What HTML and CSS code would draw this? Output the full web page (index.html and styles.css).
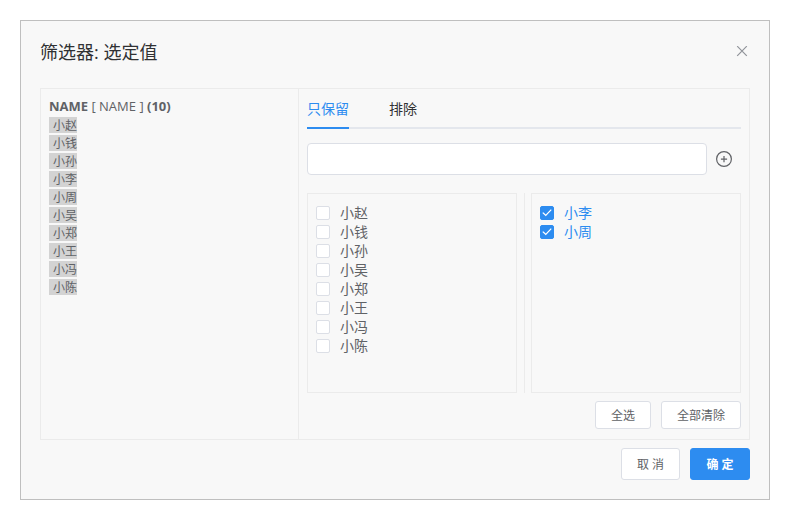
FILE: index.html
```html
<!DOCTYPE html>
<html lang="zh-CN">
<head>
<meta charset="utf-8">
<meta name="viewport" content="width=device-width, initial-scale=1">
<title>筛选器: 选定值</title>
<link rel="stylesheet" href="styles.css">
</head>
<body>
<main class="dialog" role="dialog" aria-labelledby="dialog-title">
  <header class="dialog-header">
    <h1 class="dialog-title" id="dialog-title">筛选器: 选定值</h1>
    <button class="icon-button close" type="button" aria-label="关闭">
      <svg width="12" height="12" viewBox="0 0 12 12" fill="none" stroke="currentColor" stroke-width="1.2"><path d="M1.2 .2l9.6 9.6M10.8 .2L1.2 9.8"/></svg>
    </button>
  </header>
  <div class="panels">
    <section class="summary">
      <h2 class="field"><b>NAME</b> [ NAME ] <b>(10)</b></h2>
      <ul class="values">
        <li><span class="value">小赵</span></li>
        <li><span class="value">小钱</span></li>
        <li><span class="value">小孙</span></li>
        <li><span class="value">小李</span></li>
        <li><span class="value">小周</span></li>
        <li><span class="value">小吴</span></li>
        <li><span class="value">小郑</span></li>
        <li><span class="value">小王</span></li>
        <li><span class="value">小冯</span></li>
        <li><span class="value">小陈</span></li>
      </ul>
    </section>
    <section class="picker">
      <div class="tabs" role="tablist">
        <button class="tab active" type="button" role="tab" aria-selected="true">只保留</button>
        <button class="tab" type="button" role="tab" aria-selected="false">排除</button>
      </div>
      <div class="search">
        <input class="search-input" type="text" aria-label="值">
        <button class="icon-button add" type="button" aria-label="添加">
          <svg width="16" height="16" viewBox="0 0 16 16" fill="none" stroke="currentColor" stroke-width="1.2"><circle cx="8" cy="8" r="7.4"/><path d="M8 5v6.2M4.9 8.1h6.2"/></svg>
        </button>
      </div>
      <div class="lists">
        <div class="list">
          <label class="option"><input class="check" type="checkbox">小赵</label>
          <label class="option"><input class="check" type="checkbox">小钱</label>
          <label class="option"><input class="check" type="checkbox">小孙</label>
          <label class="option"><input class="check" type="checkbox">小吴</label>
          <label class="option"><input class="check" type="checkbox">小郑</label>
          <label class="option"><input class="check" type="checkbox">小王</label>
          <label class="option"><input class="check" type="checkbox">小冯</label>
          <label class="option"><input class="check" type="checkbox">小陈</label>
        </div>
        <div class="divider"></div>
        <div class="list">
          <label class="option selected"><input class="check" type="checkbox" checked>小李</label>
          <label class="option selected"><input class="check" type="checkbox" checked>小周</label>
        </div>
      </div>
      <div class="actions">
        <button class="button small" type="button">全选</button>
        <button class="button small" type="button">全部清除</button>
      </div>
    </section>
  </div>
  <footer class="actions">
    <button class="button" type="button">取 消</button>
    <button class="button primary" type="button">确 定</button>
  </footer>
</main>
</body>
</html>
```
FILE: styles.css
```css
* { box-sizing: border-box; }

body {
  margin: 0;
  padding: 20px;
  background: #fff;
  color: #606266;
  font: 12px/18px "Open Sans", "Noto Sans CJK SC", sans-serif;
}

button, input { font: inherit; color: inherit; }

button { cursor: pointer; }

.dialog {
  padding: 19px;
  border: 1px solid #bfbfbf;
  background: #f8f8f8;
}

.dialog-header {
  display: flex;
  align-items: center;
  justify-content: space-between;
  height: 24px;
  margin-bottom: 24px;
}

.dialog-title {
  margin: 0;
  color: #303133;
  font-size: 18px;
  font-weight: 400;
  line-height: 24px;
}

.icon-button {
  display: flex;
  padding: 2px;
  border: 0;
  background: none;
}

.close { color: #909399; }

.panels {
  display: flex;
  margin-bottom: 8px;
  border: 1px solid #ebebeb;
}

.summary {
  flex: 0 0 258px;
  padding: 8px;
  border-right: 1px solid #ebebeb;
}

.field {
  margin: 0;
  font-size: 13px;
  font-weight: 400;
}

.values {
  margin: 2px 0 0;
  padding: 0;
  list-style: none;
}

.values li { display: flex; margin-bottom: 2px; }

.value {
  padding: 2px 0 0 4px;
  background: #d3d3d3;
  line-height: 14px;
}

.picker {
  flex: 1;
  min-width: 0;
  padding: 0 8px 10px;
}

.tabs {
  display: flex;
  gap: 40px;
  height: 40px;
  box-shadow: inset 0 -2px #e4e7ed;
}

.tab {
  padding: 2px 0 0;
  border: 0;
  border-bottom: 2px solid transparent;
  background: none;
  color: #303133;
  font-size: 14px;
  line-height: 36px;
}

.tab.active {
  border-color: #2d8cf0;
  color: #2d8cf0;
}

.search {
  display: flex;
  align-items: center;
  gap: 7px;
  margin: 14px 0 18px;
  padding-right: 7px;
}

.search-input {
  flex: 1;
  min-width: 0;
  height: 32px;
  padding: 0 8px;
  border: 1px solid #dcdfe6;
  border-radius: 4px;
  background: #fff;
}

.lists {
  display: flex;
  gap: 7px;
  height: 200px;
  margin-bottom: 8px;
}

.list {
  flex: 1;
  padding: 9px 8px;
  overflow: auto;
  border: 1px solid #ebebeb;
}

.divider { flex: 0 0 1px; margin-right: -1px; background: #ebebeb; }

.option {
  display: flex;
  align-items: center;
  gap: 10px;
  font-size: 14px;
  line-height: 19px;
}

.option.selected { color: #2d8cf0; }

.check {
  display: grid;
  place-items: center;
  width: 14px;
  height: 14px;
  margin: 0;
  border: 1px solid #dcdfe6;
  border-radius: 2px;
  background: #fff;
  appearance: none;
}

.check:checked {
  border-color: #2d8cf0;
  background: #2d8cf0;
}

.check:checked::after {
  content: "";
  width: 10px;
  height: 8px;
  background: #fff;
  clip-path: polygon(3% 56%, 12% 46%, 38% 74%, 88% 8%, 97% 18%, 38% 96%);
}

.actions {
  display: flex;
  justify-content: flex-end;
  gap: 10px;
}

.button {
  height: 32px;
  padding: 2px 15px 0;
  border: 1px solid #dcdfe6;
  border-radius: 3px;
  background: #fff;
  white-space: nowrap;
}

.button.small { height: 28px; }

.button.primary {
  min-width: 60px;
  border-color: #2d8cf0;
  background: #2d8cf0;
  color: #fff;
  font-weight: 700;
}
```
